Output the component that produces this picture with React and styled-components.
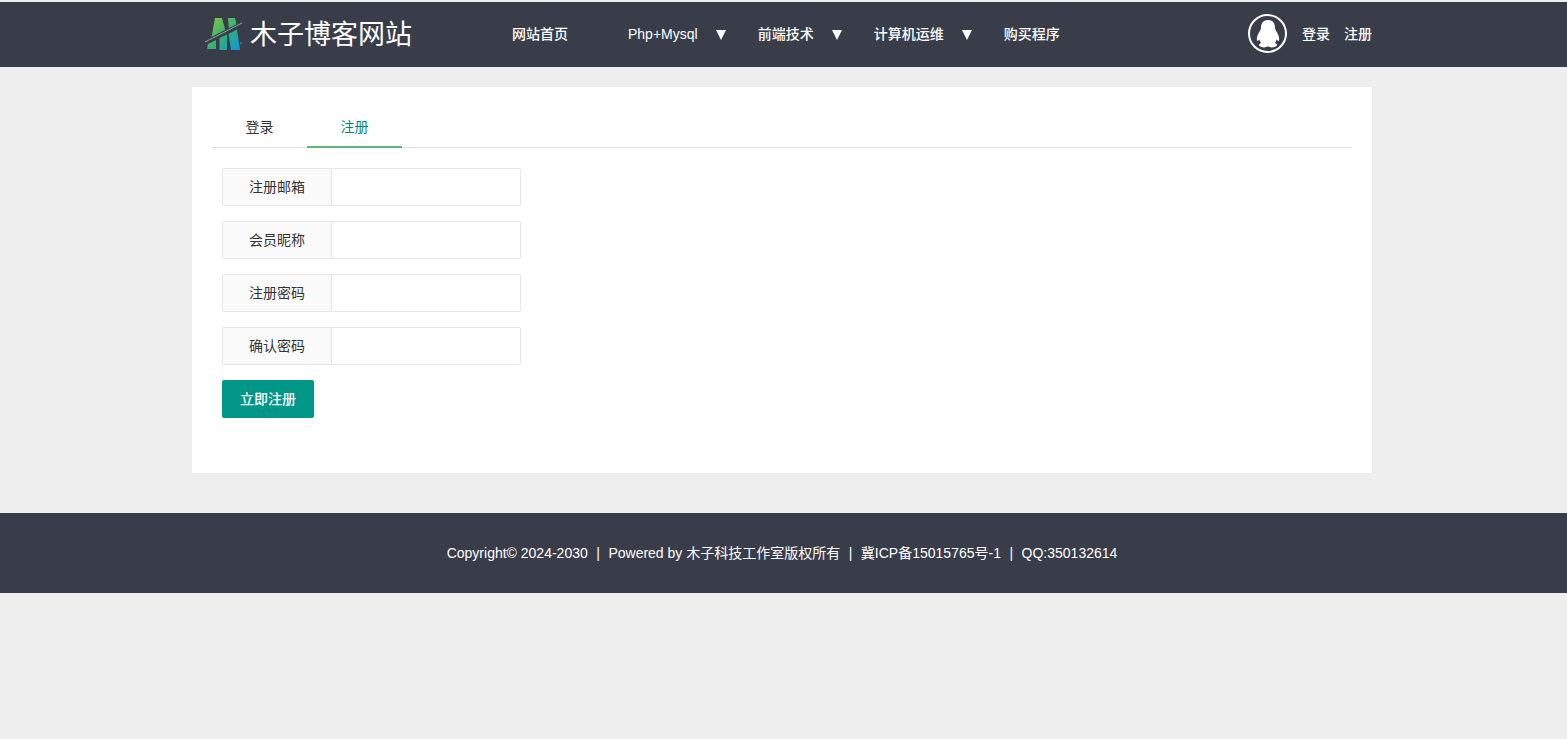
import React from "react";
import styled, { createGlobalStyle } from "styled-components";

const Global = createGlobalStyle`
  html, body { margin: 0; padding: 0; background: #eee; }
  body { font: 14px/24px "Liberation Sans", "Noto Sans CJK SC", sans-serif; color: #333; }
  * { box-sizing: border-box; }
`;
const Page = styled.div`
  padding-top: 2px;
  min-height: 739px;
  display: flex;
  flex-direction: column;
`;
const Header = styled.header`
  height: 65px;
  background: #393d49;
`;
const HeaderInner = styled.div`
  width: 1180px;
  margin: 0 0 0 192px;
  height: 100%;
  padding-bottom: 2px;
  display: flex;
  align-items: center;
`;
const Logo = styled.a`
  width: 290px;
  display: flex;
  align-items: center;
  padding-left: 13px;
  gap: 7px;
  color: #fff;
  font-size: 27px;
  line-height: 36px;
  font-weight: 400;
  font-family: "Noto Sans CJK SC", sans-serif;
`;
const LogoIcon = styled.svg`
  width: 38px;
  height: 35px;
  margin-top: 2px;
`;
const LogoText = styled.span`
  padding-bottom: 2px;
`;
const Nav = styled.nav`
  display: flex;
  height: 100%;
`;
const NavItem = styled.a`
  position: relative;
  display: flex;
  align-items: center;
  padding: 0 30px;
  color: #fff;
  font-size: 14px;
  font-weight: 500;
`;
const Caret = styled.span`
  position: absolute;
  right: 2px;
  top: 50%;
  margin-top: -4px;
  width: 0;
  height: 0;
  border-left: 5.5px solid transparent;
  border-right: 5.5px solid transparent;
  border-top: 10px solid #fff;
`;
const UserArea = styled.div`
  margin-left: auto;
  display: flex;
  align-items: center;
  color: #fff;
`;
const Avatar = styled.span`
  width: 39px;
  height: 39px;
  border: 2.5px solid #fff;
  border-radius: 50%;
  display: flex;
  align-items: center;
  justify-content: center;
  margin-right: 15px;
`;
const UserLink = styled.a`
  margin-left: ${(p) => (p.$first ? 0 : "14px")};
  font-size: 14px;
  font-weight: 500;
`;
const Main = styled.main`
  width: 1180px;
  margin: 20px 0 40px 192px;
  height: 386px;
  background: #fff;
  padding: 20px;
`;
const Tabs = styled.div`
  display: flex;
  height: 41px;
  border-bottom: 1px solid #e2e2e2;
`;
const Tab = styled.a`
  position: relative;
  width: 95px;
  height: 41px;
  line-height: 40px;
  text-align: center;
  color: ${(p) => (p.$active ? "#00897b" : "#333")};
  border-bottom: ${(p) => (p.$active ? "2px solid #5fb878" : "none")};
`;
const Form = styled.form`
  padding: 20px 10px 0;
  display: flex;
  flex-direction: column;
  gap: 15px;
  align-items: flex-start;
`;
const Row = styled.label`
  display: flex;
  width: 299px;
  height: 38px;
  border: 1px solid #e6e6e6;
  border-radius: 2px;
`;
const RowLabel = styled.span`
  width: 109px;
  background: #fafafa;
  border-right: 1px solid #e6e6e6;
  text-align: center;
  line-height: 36px;
  color: #333;
`;
const Input = styled.input`
  flex: 1;
  min-width: 0;
  border: 0;
  outline: 0;
  background: #fff;
`;
const Submit = styled.button`
  width: 92px;
  height: 38px;
  border: 0;
  border-radius: 2px;
  background: #009688;
  color: #fff;
  font: inherit;
  font-weight: 500;
`;
const Footer = styled.footer`
  height: 80px;
  background: #393d49;
  color: #fff;
  display: flex;
  align-items: center;
  justify-content: center;
  padding-right: 3px;
`;
const FooterSep = styled.span`
  padding: 0 8.5px;
`;

const LogoMark = () => (
  <LogoIcon viewBox="205 17 38 35">
    <defs>
      <linearGradient id="markFill" gradientUnits="userSpaceOnUse" x1="212" y1="20" x2="238" y2="48">
        <stop offset="0" stopColor="#7cc445" />
        <stop offset="0.55" stopColor="#2fb07c" />
        <stop offset="1" stopColor="#1296d6" />
      </linearGradient>
    </defs>
    <path
      fill="url(#markFill)"
      d="M215 18H222L226 33L211 40ZM228 18H235L237 27L229 31ZM208 44L216 40V49H207ZM219.500 38L227 34.500V50H219.500ZM228.500 34L237 29.500L240 50H231Z"
    />
    <path d="M205 42L242 23" stroke="#393d49" strokeWidth="3" />
    <path d="M205 42L242 23" stroke="#8fa7a0" strokeWidth="1" />
    <rect x="240.500" y="42.500" width="1" height="1" fill="#cfd6d8" />
  </LogoIcon>
);
const Qq = () => (
  <svg width="24" height="28" viewBox="0 0 24 28">
    <path
      fill="#fff"
      d="M12 0C17.500 0 19 4 19 8C19 9.500 20 10.500 21 12.500C22.800 15.500 23.500 18 23 20.500C22.500 21.500 21.500 20.500 20.500 19.500C20.200 21 19.700 22 19 23C21 24 21.500 25 20.500 26C18.500 27.800 14 27.800 12 26.300C10 27.800 5.500 27.800 3.500 26C2.500 25 3 24 5 23C4.300 22 3.800 21 3.500 19.500C2.500 20.500 1.500 21.500 1 20.500C.5 18 1.200 15.500 3 12.500C4 10.500 5 9.500 5 8C5 4 6.500 0 12 0Z"
    />
  </svg>
);

const navItems = [
  { t: "网站首页" },
  { t: "Php+Mysql", caret: true },
  { t: "前端技术", caret: true },
  { t: "计算机运维", caret: true },
  { t: "购买程序" },
];
const fields = ["注册邮箱", "会员昵称", "注册密码", "确认密码"];
const footerParts = ["Copyright© 2024-2030", "Powered by 木子科技工作室版权所有", "冀ICP备15015765号-1", "QQ:350132614"];

export default function App() {
  return (
    <Page>
      <Global />
      <Header>
        <HeaderInner>
          <Logo>
            <LogoMark />
            <LogoText>木子博客网站</LogoText>
          </Logo>
          <Nav>
            {navItems.map((n) => (
              <NavItem key={n.t}>
                {n.t}
                {n.caret && <Caret />}
              </NavItem>
            ))}
          </Nav>
          <UserArea>
            <Avatar>
              <Qq />
            </Avatar>
            <UserLink $first>登录</UserLink>
            <UserLink>注册</UserLink>
          </UserArea>
        </HeaderInner>
      </Header>
      <Main>
        <Tabs>
          <Tab>登录</Tab>
          <Tab $active>注册</Tab>
        </Tabs>
        <Form>
          {fields.map((f) => (
            <Row key={f}>
              <RowLabel>{f}</RowLabel>
              <Input />
            </Row>
          ))}
          <Submit type="button">立即注册</Submit>
        </Form>
      </Main>
      <Footer>
        {footerParts.map((p, i) => (
          <React.Fragment key={p}>
            {i > 0 && <FooterSep>|</FooterSep>}
            {p}
          </React.Fragment>
        ))}
      </Footer>
    </Page>
  );
}
